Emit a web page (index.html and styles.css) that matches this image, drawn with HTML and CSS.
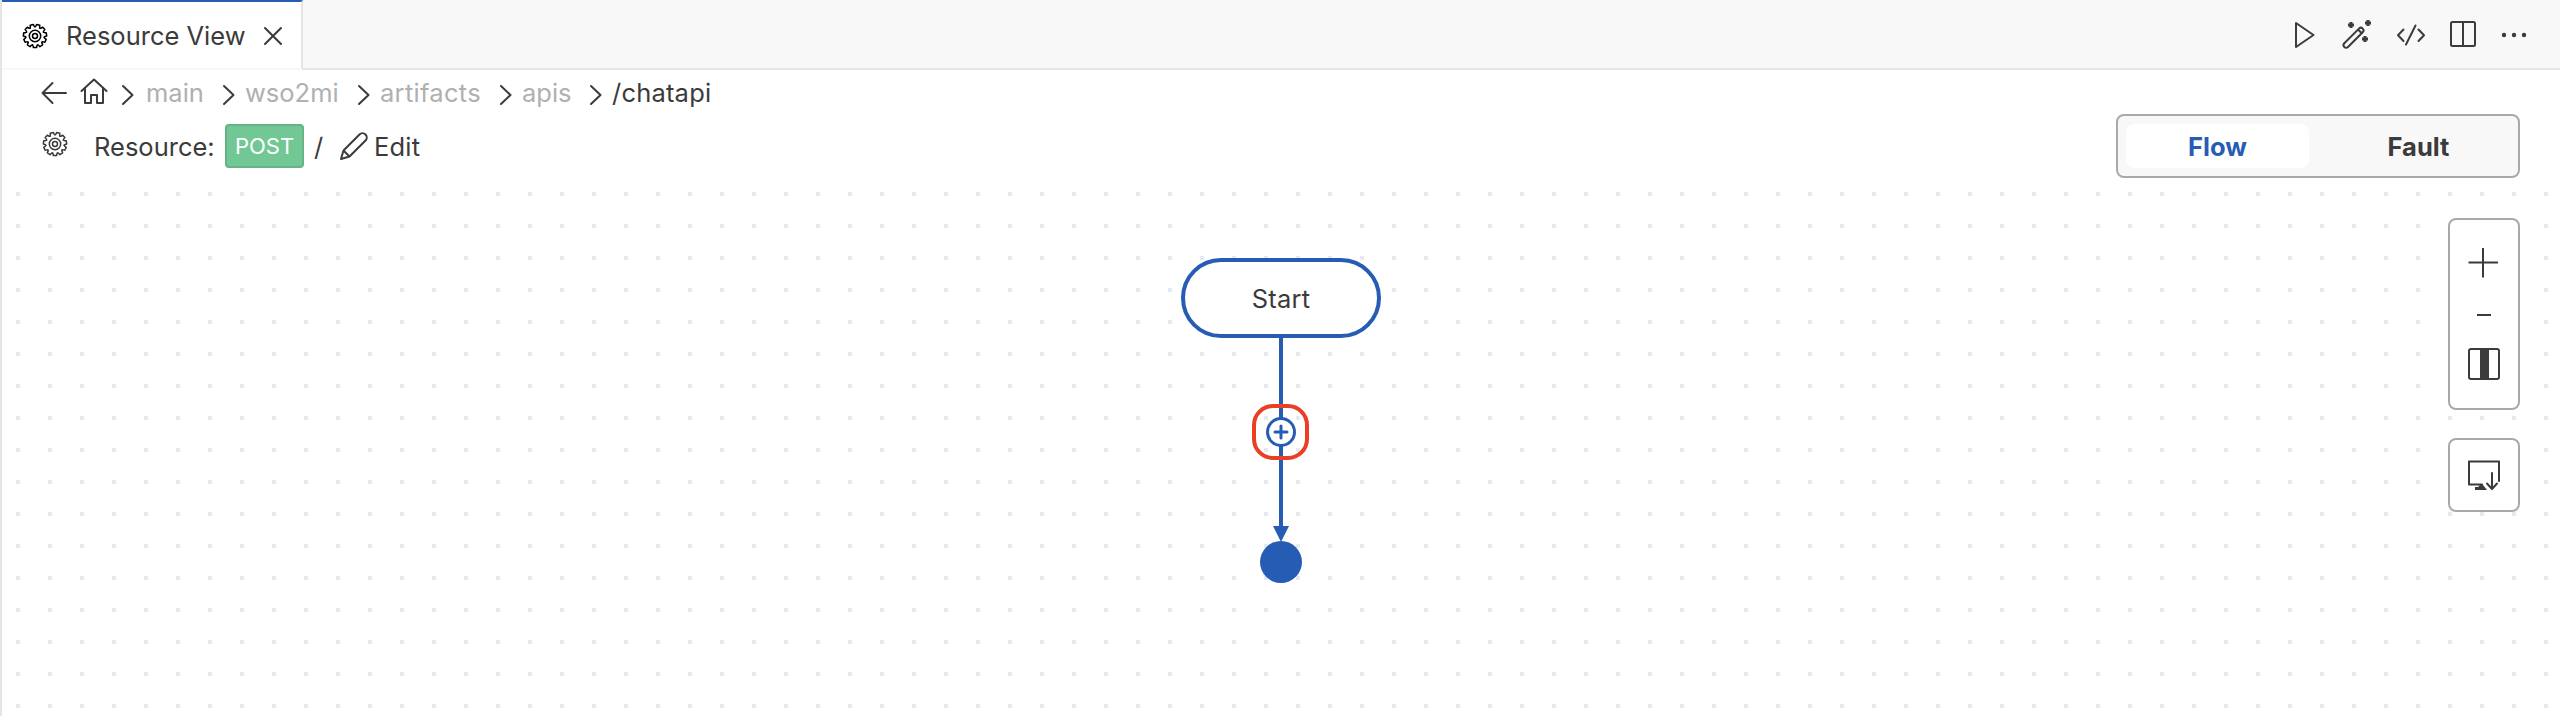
FILE: index.html
```
<!DOCTYPE html>
<html lang="en">
<head>
<meta charset="utf-8">
<title>Resource View</title>
<link rel="stylesheet" href="styles.css">
</head>
<body>
<svg class="defs" width="0" height="0">
  <defs>
    <path id="tooth" d="M-2.620-8.920Q-2.100-9.200-1.900-10L-1.600-11.600H1.600L1.900-10Q2.100-9.200 2.620-8.920"/>
    <g id="gear">
      <use href="#tooth" transform="rotate(16.360)"/><use href="#tooth" transform="rotate(49.090)"/>
      <use href="#tooth" transform="rotate(81.820)"/><use href="#tooth" transform="rotate(114.550)"/>
      <use href="#tooth" transform="rotate(147.270)"/><use href="#tooth" transform="rotate(180)"/>
      <use href="#tooth" transform="rotate(212.730)"/><use href="#tooth" transform="rotate(245.450)"/>
      <use href="#tooth" transform="rotate(278.180)"/><use href="#tooth" transform="rotate(310.910)"/>
      <use href="#tooth" transform="rotate(343.640)"/>
      <circle r="5.700"/><circle r="2.500"/>
    </g>
  </defs>
</svg>
<div class="app">
  <header class="tabs">
    <div class="tab">
      <svg class="icon gear tab-gear" width="26" height="26" viewBox="-13 -13 26 26"><use href="#gear"/></svg>
      <span class="tab-title">Resource View</span>
      <svg class="icon" width="20" height="20" viewBox="0 0 20 20"><path d="M2 2L18 18M18 2L2 18"/></svg>
    </div>
    <nav class="actions">
      <svg class="icon" width="28" height="32" viewBox="0 0 28 32"><path d="M5 4V28L22.500 16Z"/></svg>
      <svg class="icon" width="32" height="32" viewBox="0 0 32 32"><path d="M3.300 24.300L18 9.600A2.600 2.600 0 0 1 21.700 13.300L7 28A2.600 2.600 0 0 1 3.300 24.300ZM17 10.500L20.500 14"/><path class="spark" d="M10 3V9M7 6H13M27 1V7M24 4H30M24 17V23M21 20H27"/></svg>
      <svg class="icon" width="32" height="32" viewBox="0 0 32 32"><path d="M8.500 10.500L3 16.300L8.500 22M23.500 10.500L29 16.300L23.500 22M20.500 6.500L11 25.500"/></svg>
      <svg class="icon" width="28" height="32" viewBox="0 0 28 32"><rect x="2" y="3" width="24" height="24" rx="1.500"/><path d="M14 3V27"/></svg>
      <svg class="icon dots" width="28" height="32" viewBox="0 0 28 32"><circle cx="4" cy="16" r="2.200"/><circle cx="14" cy="16" r="2.200"/><circle cx="24" cy="16" r="2.200"/></svg>
    </nav>
  </header>

  <div class="top">
    <div class="left">
      <div class="crumbs">
        <svg class="icon back" width="26" height="24" viewBox="0 0 26 24"><path d="M1.500 12H25M11.500 2L1.500 12L11.500 22"/></svg>
        <svg class="icon home" width="28" height="28" viewBox="0 0 28 28"><path d="M1.500 14L14 2.500L26.500 14M5 11.500V26H11V18H17V26H23V11.500"/></svg>
        <svg class="icon sep" width="14" height="22" viewBox="0 0 14 22"><path d="M2 2L11.500 11L2 20"/></svg>
        <span class="crumb main">main</span>
        <svg class="icon sep" width="14" height="22" viewBox="0 0 14 22"><path d="M2 2L11.500 11L2 20"/></svg>
        <span class="crumb wso">wso2mi</span>
        <svg class="icon sep" width="14" height="22" viewBox="0 0 14 22"><path d="M2 2L11.500 11L2 20"/></svg>
        <span class="crumb artifacts">artifacts</span>
        <svg class="icon sep" width="14" height="22" viewBox="0 0 14 22"><path d="M2 2L11.500 11L2 20"/></svg>
        <span class="crumb apis">apis</span>
        <svg class="icon sep" width="14" height="22" viewBox="0 0 14 22"><path d="M2 2L11.500 11L2 20"/></svg>
        <span class="crumb current">/chatapi</span>
      </div>
      <div class="resource">
        <svg class="icon gear res-gear" width="26" height="26" viewBox="-13 -13 26 26"><use href="#gear"/></svg>
        <span class="res-label">Resource:</span>
        <span class="method">POST</span>
        <span class="path">/</span>
        <svg class="icon pencil" width="30" height="30" viewBox="0 0 30 30"><path d="M2 28L4.500 19.500L20.500 3.500A3.900 3.900 0 0 1 26.500 9.500L10.500 25.500ZM4.500 19.500L10.500 25.500"/></svg>
        <span class="edit">Edit</span>
      </div>
    </div>
    <div class="switch">
      <span class="option active">Flow</span>
      <span class="option">Fault</span>
    </div>
  </div>

  <main class="canvas">
    <div class="node start">Start</div>
    <svg class="links" width="64" height="248" viewBox="0 0 64 248">
      <path class="line" d="M32 0V190"/>
      <path class="fill" d="M24 188H40L32 204Z"/>
      <circle class="fill" cx="32" cy="224" r="21"/>
      <circle class="add" cx="32" cy="94" r="13.500"/>
      <path class="add" d="M26 94H38M32 88V100"/>
      <rect class="highlight" x="5" y="68" width="53" height="52" rx="19"/>
    </svg>
    <aside class="controls">
      <div class="panel zoom">
        <svg class="icon" width="68" height="188" viewBox="0 0 68 188"><path class="plus" d="M18.500 42.500H48M33 28V57.500"/><path class="plus" d="M27 95H41"/><rect x="19" y="129" width="30" height="30" rx="2"/><path class="bar" d="M30 129H39V159H30Z"/></svg>
      </div>
      <div class="panel export">
        <svg class="icon" width="68" height="70" viewBox="0 0 68 70"><path d="M32 44.500H19V21.500H49V41M42 33V49M37 43.500L42 49L47 43.500"/><path class="bar" d="M31 44L28 47H25V50H37L33.500 45.500Z"/></svg>
      </div>
    </aside>
  </main>
</div>
</body>
</html>
```
FILE: styles.css
```
* { box-sizing: border-box; }
body { margin: 0; background: #fff; color: #3b3b3b; font-family: Inter, "Liberation Sans", sans-serif; font-size: 25.5px; line-height: 32px; }
.defs { position: absolute; }
.app { height: 716px; display: flex; flex-direction: column; border-left: 2px solid #e5e5e5; overflow: hidden; }
.icon { display: block; flex: none; fill: none; stroke: #3b3b3b; stroke-width: 2; stroke-linejoin: round; stroke-linecap: round; }
.gear { stroke-width: 1.5; }
span { white-space: nowrap; }

.tabs { height: 70px; flex: none; display: flex; justify-content: space-between; background: #f8f8f8; border-bottom: 2px solid #e5e5e5; }
.tab { width: 301px; height: 70px; display: flex; align-items: center; padding: 1px 0 0 20px; background: #fff; border-top: 2px solid #265cb3; border-right: 2px solid #e5e5e5; border-bottom: 2px solid #f8f8f8; }
.tab-gear { stroke: #000; }
.tab-title { width: 215px; padding: 1px 0 0 18px; }
.actions { display: flex; align-items: center; gap: 22px; padding: 2px 32px 0 0; }
.actions .dots { margin-left: 1px; }
.spark { stroke-width: 3; stroke-linecap: butt; }
.dots { fill: #3b3b3b; stroke: none; }

.top { height: 120px; flex: none; display: flex; justify-content: space-between; align-items: flex-start; padding-right: 40px; }
.left { padding-left: 39px; }
.crumbs { display: flex; align-items: center; height: 46px; color: #b0b0b0; }
.home { margin: -4px 13px 0 13px; }
.sep { margin-top: 4px; }
.crumb { padding-left: 10px; }
.main { width: 87px; padding-left: 11px; }
.wso { width: 121px; padding-left: 9px; }
.artifacts { width: 128px; padding-left: 9px; letter-spacing: 0.3px; }
.apis { width: 76px; padding-left: 9px; }
.current { padding-left: 9px; color: #3b3b3b; letter-spacing: 0.2px; }
.resource { display: flex; align-items: center; height: 60px; }
.res-gear { margin: -5px 0 0 1px; }
.res-label { width: 157px; padding: 2px 0 0 26px; }
.method { width: 79px; height: 44px; padding-top: 5px; text-align: center; font-size: 22px; line-height: 30px; color: #fff; background: #72c895; border: 2px solid #65b386; border-radius: 4px; }
.path { width: 35px; padding: 2px 0 0 10px; }
.edit { padding: 2px 0 0 5px; letter-spacing: 0.2px; }

.switch { width: 404px; height: 64px; margin-top: 44px; padding: 8px; display: flex; gap: 18px; background: #f8f8f8; border: 2px solid #a9a9a9; border-radius: 8px; font-weight: 700; }
.option { width: 184px; height: 44px; line-height: 46px; text-align: center; border-radius: 8px; }
.active { color: #265cb3; background: #fff; }

.canvas { position: relative; flex: 1; background-image: conic-gradient(from 90deg at 28px 28px, #e5eaf0 90deg, transparent 0); background-size: 32px 32px; background-position: -14px -26px; }
.node { position: absolute; left: 1179px; top: 68px; width: 200px; height: 80px; display: flex; align-items: center; justify-content: center; padding-top: 2px; letter-spacing: 0.2px; background: #fff; border: 4px solid #265cb3; border-radius: 40px; }
.links { position: absolute; left: 1247px; top: 148px; fill: none; }
.line { stroke: #265cb3; stroke-width: 4; }
.fill { fill: #265cb3; }
.add { fill: #fff; stroke: #265cb3; stroke-width: 3; stroke-linecap: round; }
.highlight { stroke: #ea3f24; stroke-width: 4; }
.controls { position: absolute; right: 40px; top: 28px; display: flex; flex-direction: column; gap: 28px; }
.panel { width: 72px; background: #fff; border: 2px solid #a9a9a9; border-radius: 8px; }
.zoom { height: 192px; }
.export { height: 74px; }
.plus { stroke-linecap: butt; }
.bar { fill: #3b3b3b; stroke: none; }
```
